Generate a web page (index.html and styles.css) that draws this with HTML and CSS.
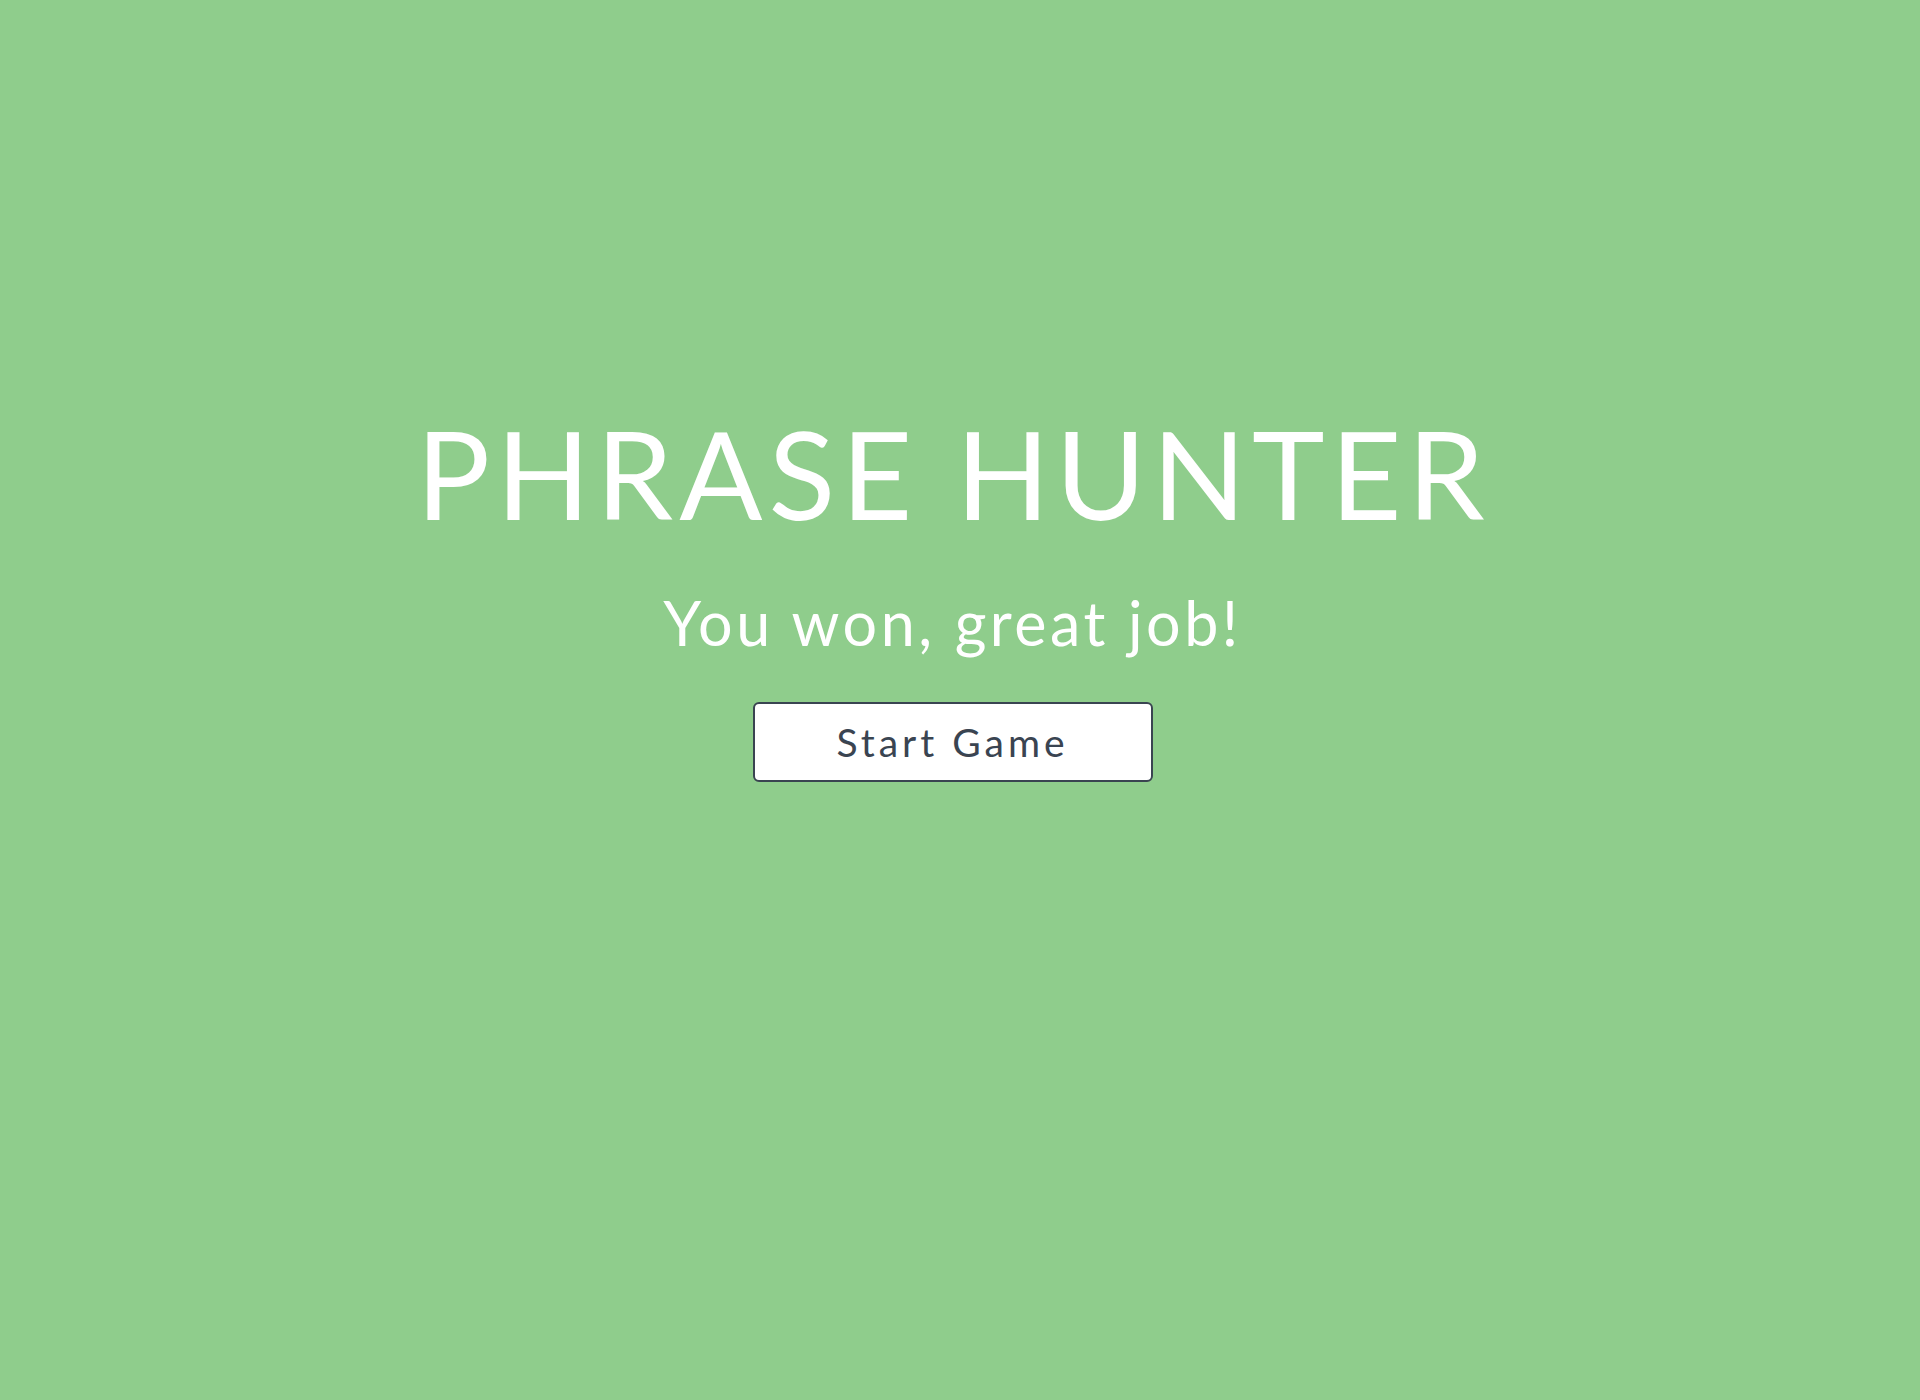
FILE: index.html
```
<!DOCTYPE html>
<html lang="en">
<head>
<meta charset="utf-8">
<title>Phrase Hunter</title>
<link rel="stylesheet" href="styles.css">
</head>
<body>
<div class="overlay">
  <h1 class="title">Phrase Hunter</h1>
  <h2 class="message">You won, great job!</h2>
  <button class="btn-reset">Start Game</button>
</div>
</body>
</html>
```
FILE: styles.css
```
html, body {
  margin: 0;
  padding: 0;
  height: 100%;
}
body {
  background: #8fcd8c;
  font-family: "Lato", "Open Sans", sans-serif;
}
.overlay {
  display: flex;
  flex-direction: column;
  align-items: center;
  padding: 411px 15px 0 0;
  min-height: 1400px;
  box-sizing: border-box;
  background: #8fcd8c;
}
.title {
  margin: 0;
  font-size: 123px;
  line-height: 1;
  font-weight: 400;
  color: #fff;
  text-transform: uppercase;
  letter-spacing: 6px;
  text-indent: 2px;
}
.message {
  margin: 58px 0 0;
  font-size: 61px;
  line-height: 1;
  font-weight: 400;
  color: #fff;
  letter-spacing: 3.5px;
}
.btn-reset {
  margin-top: 49px;
  width: 400px;
  height: 80px;
  background: #fff;
  border: 2px solid #3a4451;
  border-radius: 6px;
  font-family: "Lato", "Open Sans", sans-serif;
  font-size: 39px;
  color: #3a4451;
  letter-spacing: 4px;
  text-indent: 0;
  padding: 0;
}
```
